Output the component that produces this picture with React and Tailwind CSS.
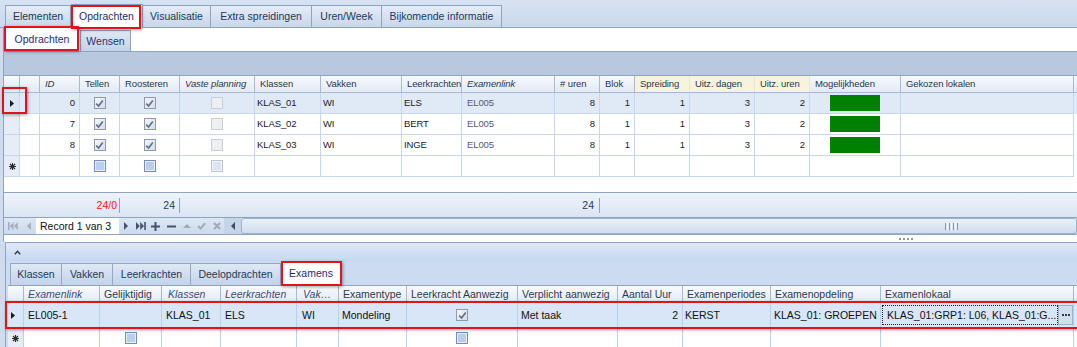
import React from "react";

const TOPG = "grid grid-cols-[16px_20px_40px_40px_60px_75px_66px_81px_60px_93px_45px_35px_55px_65px_55px_91px_173px]";
const BOTG = "grid grid-cols-[16px_76px_62px_59px_76px_42px_68px_111px_100px_65px_88px_110px_193px]";

const H = "flex items-center pl-[5px] border-r border-[#a7bad3] whitespace-nowrap overflow-hidden";
const HY = "flex items-center pl-[5px] border-r border-[#ebe8c8] bg-[#f6f4dd] whitespace-nowrap overflow-hidden";
const C = "flex items-center border-r border-b border-[#c6d8ef] whitespace-nowrap overflow-hidden";
const CI = "relative flex items-center border-r border-b border-[#c6d8ef]";
const BH = "flex items-center pl-[4px] border-r border-[#a7bad3] whitespace-nowrap overflow-hidden";
const BC = "flex items-center border-r border-b border-[#bcd0ea] whitespace-nowrap overflow-hidden";

function RedBox({ className }) {
  return (
    <span
      className={
        "pointer-events-none absolute z-20 border-2 border-[#e3131b] shadow-[1px_1px_3px_rgba(0,0,0,0.35)] " +
        className
      }
    />
  );
}

function Tri() {
  return (
    <svg width="4" height="7" viewBox="0 0 4 7">
      <path d="M0 0L4 3.5L0 7Z" fill="#1a1a1a" />
    </svg>
  );
}

function Star() {
  return (
    <svg width="7" height="7" viewBox="0 0 7 7">
      <path d="M3.5 0V7M0 3.5H7M1 1L6 6M6 1L1 6" stroke="#2a2a2a" strokeWidth="1.1" />
    </svg>
  );
}

function Cb({ k }) {
  if (k === "on")
    return (
      <span className="w-[12px] h-[12px] border border-[#8e9bad] bg-gradient-to-br from-[#f5f6f8] to-[#d8dce2] flex items-center justify-center">
        <svg width="9" height="9" viewBox="0 0 9 9">
          <path d="M1.2 4.6L3.6 7L7.8 1.4" fill="none" stroke="#5a7295" strokeWidth="1.7" />
        </svg>
      </span>
    );
  if (k === "off") return <span className="w-[12px] h-[12px] border border-[#cbd0d8] bg-[#eeeff2]" />;
  if (k === "new")
    return <span className="w-[12px] h-[12px] border border-[#6d90c4] bg-[#b9cfee] shadow-[inset_0_0_0_1px_#e6eefa]" />;
  return <span className="w-[12px] h-[12px] border border-[#b8c4d4] bg-[#dfe5ee] shadow-[inset_0_0_0_1px_#f2f5f9]" />;
}

function TopTab({ w, first, children }) {
  return (
    <div
      className={
        w +
        " h-[22px] flex items-center justify-center border-t border-r border-[#8ea4c1] bg-gradient-to-b from-[#e4ecf7] to-[#c8d7eb] text-[#1e395b] whitespace-nowrap " +
        (first ? "border-l" : "")
      }
    >
      {children}
    </div>
  );
}

function BTab({ w, first, children }) {
  return (
    <div
      className={
        w +
        " h-[22px] flex items-center justify-center border-t border-r border-[#93a8c4] bg-gradient-to-b from-[#dfe8f5] to-[#c3d3e9] text-[#1e395b] whitespace-nowrap " +
        (first ? "border-l" : "")
      }
    >
      {children}
    </div>
  );
}

function TopRow({ id, kl, lk, sel }) {
  return (
    <div className={TOPG + " h-[21px] text-[9.5px] tracking-[-0.1px] text-[#1b1b1b] " + (sel ? "bg-[#e0e9f6]" : "bg-white")}>
      <div className={CI + " pl-[6px] " + (sel ? "bg-[#dce6f4]" : "bg-[#e6edf7]")}>
        {sel && <Tri />}
        {sel && <RedBox className="left-[-2px] top-[-6px] w-[25px] h-[27px]" />}
      </div>
      <div className={C} />
      <div className={C + " justify-end pr-[4px]"}>{id}</div>
      <div className={C + " justify-center"}>
        <Cb k="on" />
      </div>
      <div className={C + " justify-center"}>
        <Cb k="on" />
      </div>
      <div className={C + " justify-center"}>
        <Cb k="off" />
      </div>
      <div className={C + " pl-[2px]"}>{kl}</div>
      <div className={C + " pl-[2px]"}>WI</div>
      <div className={C + " pl-[2px]"}>{lk}</div>
      <div className={C + " pl-[5px] text-[#5d5577]"}>EL005</div>
      <div className={C + " justify-end pr-[4px]"}>8</div>
      <div className={C + " justify-end pr-[4px]"}>1</div>
      <div className={C + " justify-end pr-[4px]"}>1</div>
      <div className={C + " justify-end pr-[4px]"}>3</div>
      <div className={C + " justify-end pr-[4px]"}>2</div>
      <div className={C}>
        <div className="ml-[20px] w-[50px] h-[16px] bg-[#008000]" />
      </div>
      <div className={C} />
    </div>
  );
}

function NavIcon({ w, children }) {
  return <div className={w + " h-full flex items-center justify-center"}>{children}</div>;
}

export default function App() {
  return (
    <div className="w-[1077px] h-[347px] overflow-hidden bg-[#cfdcee] font-['Liberation_Sans',Arial,sans-serif] text-[10.5px] leading-none select-none">
      {/* main tabs */}
      <div className="flex items-end h-[28px] pl-[5px] border-b border-[#8ea4c1] bg-gradient-to-b from-[#d6e2f1] to-[#cbd9ec]">
        <TopTab w="w-[66px]" first>
          Elementen
        </TopTab>
        <div className="relative z-10 w-[72px] h-[24px] mb-[-1px] flex items-center justify-center bg-white border-r border-t border-[#8ea4c1] text-[#1b2f6e]">
          Opdrachten
          <RedBox className="left-[0px] top-[0px] w-[70px] h-[24px]" />
        </div>
        <TopTab w="w-[68px]">Visualisatie</TopTab>
        <TopTab w="w-[101px]">Extra spreidingen</TopTab>
        <TopTab w="w-[70px]">Uren/Week</TopTab>
        <TopTab w="w-[120px]">Bijkomende informatie</TopTab>
      </div>

      {/* main panel */}
      <div className="ml-[3px] border-l border-[#8ea4c1] bg-white">
        {/* sub tabs */}
        <div className="flex items-end h-[23px] bg-white">
          <div className="relative w-[76px] h-[23px] flex items-center justify-center bg-white text-[#1b2f6e]">
            Opdrachten
            <RedBox className="left-[0px] top-[-2px] w-[75px] h-[25px]" />
          </div>
          <div className="w-[51px] h-[21px] flex items-center justify-center border-t border-r border-l border-[#8ea4c1] bg-gradient-to-b from-[#e0e9f5] to-[#c3d3e8] text-[#1e395b]">
            Wensen
          </div>
        </div>

        {/* group band */}
        <div className="h-[25px] border-y border-[#8ea4c1] bg-[#b7c8df]" />

        {/* header */}
        <div className={TOPG + " h-[17px] border-b border-[#a7bad3] bg-gradient-to-b from-[#f7f9fd] to-[#e3eaf5] text-[9.5px] tracking-[-0.1px] text-[#28374d]"}>
          <div className={H} />
          <div className={H} />
          <div className={H + " italic"}>ID</div>
          <div className={H}>Tellen</div>
          <div className={H}>Roosteren</div>
          <div className={H + " italic"}>Vaste planning</div>
          <div className={H}>Klassen</div>
          <div className={H}>Vakken</div>
          <div className={H + " pl-[4px]"}>Leerkrachten</div>
          <div className={H + " italic"}>Examenlink</div>
          <div className={H}># uren</div>
          <div className={H}>Blok</div>
          <div className={HY}>Spreiding</div>
          <div className={HY}>Uitz. dagen</div>
          <div className={HY}>Uitz. uren</div>
          <div className={H}>Mogelijkheden</div>
          <div className={H}>Gekozen lokalen</div>
        </div>

        <TopRow id="0" kl="KLAS_01" lk="ELS" sel />
        <TopRow id="7" kl="KLAS_02" lk="BERT" />
        <TopRow id="8" kl="KLAS_03" lk="INGE" />

        {/* new row */}
        <div className={TOPG + " h-[21px] bg-white"}>
          <div className={C + " pl-[5px] bg-[#e6edf7]"}>
            <Star />
          </div>
          <div className={C} />
          <div className={C} />
          <div className={C + " justify-center"}>
            <Cb k="new" />
          </div>
          <div className={C + " justify-center"}>
            <Cb k="new" />
          </div>
          <div className={C + " justify-center"}>
            <Cb k="newoff" />
          </div>
          <div className={C} />
          <div className={C} />
          <div className={C} />
          <div className={C} />
          <div className={C} />
          <div className={C} />
          <div className={C} />
          <div className={C} />
          <div className={C} />
          <div className={C} />
          <div className={C} />
        </div>

        <div className="h-[15px] bg-white" />

        {/* footer summary */}
        <div className="h-[26px] border-y border-[#8ea4c1] bg-gradient-to-b from-[#eef3fa] to-[#dbe5f2] text-[10.5px] text-[#2a3a58]">
          <div className={TOPG + " h-full items-center"}>
            <div />
            <div />
            <div />
            <div className="h-[15px] border-r border-[#8ea4c1] flex items-center justify-end pr-[2px] text-[#ff1414]">24/0</div>
            <div className="h-[15px] border-r border-[#8ea4c1] flex items-center justify-end pr-[4px]">24</div>
            <div />
            <div />
            <div />
            <div />
            <div />
            <div className="h-[15px] border-r border-[#8ea4c1] flex items-center justify-end pr-[5px]">24</div>
          </div>
        </div>

        {/* navigator */}
        <div className="h-[17px] border-b border-[#8ea4c1] bg-gradient-to-b from-[#dde7f4] to-[#ccdaed] flex">
          <NavIcon w="w-[17px]">
            <svg width="10" height="8" viewBox="0 0 10 8">
              <path d="M0 0H1.6V8H0Z M5.6 0V8L1.8 4Z M9.8 0V8L6 4Z" fill="#a6afbd" />
            </svg>
          </NavIcon>
          <NavIcon w="w-[15px]">
            <svg width="4" height="8" viewBox="0 0 4 8">
              <path d="M4 0V8L0 4Z" fill="#a6afbd" />
            </svg>
          </NavIcon>
          <div className="w-[83px] h-full bg-white flex items-center pl-[4px] text-[10.5px] text-[#111]">Record 1 van 3</div>
          <NavIcon w="w-[14px]">
            <svg width="4" height="8" viewBox="0 0 4 8">
              <path d="M0 0V8L4 4Z" fill="#44546d" />
            </svg>
          </NavIcon>
          <NavIcon w="w-[15px]">
            <svg width="10" height="8" viewBox="0 0 10 8">
              <path d="M0 0V8L3.8 4Z M4.2 0V8L8 4Z M8.2 0H9.8V8H8.2Z" fill="#44546d" />
            </svg>
          </NavIcon>
          <NavIcon w="w-[15px]">
            <svg width="9" height="9" viewBox="0 0 9 9">
              <path d="M3.5 0H5.5V9H3.5Z M0 3.5H9V5.5H0Z" fill="#44546d" />
            </svg>
          </NavIcon>
          <NavIcon w="w-[16px]">
            <svg width="9" height="9" viewBox="0 0 9 9">
              <path d="M0 3.5H9V5.5H0Z" fill="#44546d" />
            </svg>
          </NavIcon>
          <NavIcon w="w-[15px]">
            <svg width="8" height="6" viewBox="0 0 8 6">
              <path d="M0 5H8L4 1Z" fill="#a0a9b6" />
            </svg>
          </NavIcon>
          <NavIcon w="w-[15px]">
            <svg width="9" height="8" viewBox="0 0 9 8">
              <path d="M1 4L3.6 6.6L8.2 1.2" fill="none" stroke="#a0a9b6" strokeWidth="2" />
            </svg>
          </NavIcon>
          <NavIcon w="w-[15px]">
            <svg width="8" height="8" viewBox="0 0 8 8">
              <path d="M1 1L7 7M7 1L1 7" stroke="#a0a9b6" strokeWidth="2" />
            </svg>
          </NavIcon>
          <div className="w-[17px] h-full bg-[#c6d4e8] flex items-center justify-center">
            <svg width="4" height="8" viewBox="0 0 4 8">
              <path d="M4 0V8L0 4Z" fill="#3e4d66" />
            </svg>
          </div>
          <div className="flex-1 h-full rounded-[3px] border border-[#9fb2cb] bg-gradient-to-b from-[#e9f0f9] to-[#d0ddef] flex items-center">
            <div className="ml-[703px] flex gap-[1px]">
              <span className="w-[1px] h-[7px] bg-[#8196b3]" />
              <span className="w-[1px] h-[7px] bg-[#ffffff]" />
              <span className="w-[1px] h-[7px] bg-[#8196b3]" />
              <span className="w-[1px] h-[7px] bg-[#ffffff]" />
              <span className="w-[1px] h-[7px] bg-[#8196b3]" />
              <span className="w-[1px] h-[7px] bg-[#ffffff]" />
              <span className="w-[1px] h-[7px] bg-[#8196b3]" />
            </div>
          </div>
        </div>

        {/* splitter */}
        <div className="h-[7px] bg-white flex items-center">
          <div className="ml-[895px] flex gap-[2px]">
            <span className="w-[2px] h-[2px] bg-[#8497b4]" />
            <span className="w-[2px] h-[2px] bg-[#8497b4]" />
            <span className="w-[2px] h-[2px] bg-[#8497b4]" />
            <span className="w-[2px] h-[2px] bg-[#8497b4]" />
          </div>
        </div>
      </div>

      {/* bottom panel */}
      <div className="ml-[5px] border-l border-[#8ea4c1] bg-[#ccdbef]">
        <div className="h-[19px] border-t border-[#8ea4c1] bg-gradient-to-b from-[#dfe9f8] to-[#c6d8f0] flex items-center pl-[8px]">
          <svg width="7" height="5" viewBox="0 0 7 5">
            <path d="M0.8 4.2L3.5 1.3L6.2 4.2" fill="none" stroke="#2f3d52" strokeWidth="1.5" />
          </svg>
        </div>
        <div className="h-[24px] flex items-end pl-[4px] bg-[#ccdbef]">
          <BTab w="w-[52px]" first>
            Klassen
          </BTab>
          <BTab w="w-[51px]">Vakken</BTab>
          <BTab w="w-[78px]">Leerkrachten</BTab>
          <BTab w="w-[90px]">Deelopdrachten</BTab>
          <div className="relative w-[61px] h-[24px] flex items-center justify-center bg-white border-t border-r border-[#93a8c4] text-[#1b2f6e]">
            Examens
            <RedBox className="left-[0px] top-[-1px] w-[61px] h-[25px]" />
          </div>
        </div>

        <div className="ml-[2px] bg-white">
          {/* header */}
          <div className={BOTG + " h-[18px] border-t border-b border-t-[#8ea4c1] border-b-[#a7bad3] bg-gradient-to-b from-[#f8fafd] to-[#e3ebf6] text-[#2c3a50]"}>
            <div className={BH} />
            <div className={BH + " italic text-[#3d4c78]"}>Examenlink</div>
            <div className={BH}>Gelijktijdig</div>
            <div className={BH + " italic pl-[6px] text-[#3d4c78]"}>Klassen</div>
            <div className={BH + " italic text-[#3d4c78]"}>Leerkrachten</div>
            <div className={BH + " italic pl-[6px] text-[#3d4c78]"}>Vak…</div>
            <div className={BH}>Examentype</div>
            <div className={BH}>Leerkracht Aanwezig</div>
            <div className={BH}>Verplicht aanwezig</div>
            <div className={BH}>Aantal Uur</div>
            <div className={BH}>Examenperiodes</div>
            <div className={BH}>Examenopdeling</div>
            <div className={BH}>Examenlokaal</div>
          </div>

          {/* selected row */}
          <div className={BOTG + " relative h-[25px] bg-[#d9e6f8] text-[#111]"}>
            <RedBox className="left-[-3px] right-[-2px] top-[-2px] bottom-[-1px]" />
            <div className={BC + " pl-[3px]"}>
              <Tri />
            </div>
            <div className={BC + " pl-[4px]"}>EL005-1</div>
            <div className={BC} />
            <div className={BC + " pl-[4px]"}>KLAS_01</div>
            <div className={BC + " pl-[4px]"}>ELS</div>
            <div className={BC + " pl-[5px]"}>WI</div>
            <div className={BC + " pl-[3px]"}>Mondeling</div>
            <div className={BC + " justify-center"}>
              <Cb k="on" />
            </div>
            <div className={BC + " pl-[3px]"}>Met taak</div>
            <div className={BC + " justify-end pr-[4px]"}>2</div>
            <div className={BC + " pl-[2px]"}>KERST</div>
            <div className={BC + " pl-[3px]"}>KLAS_01: GROEPEN</div>
            <div className={BC + " pl-[1px]"}>
              <div className="flex-1 h-[20px] border border-dotted border-[#222] flex items-center pl-[4px] overflow-hidden">
                KLAS_01:GRP1: L06, KLAS_01:G...
              </div>
              <div className="w-[15px] h-[20px] border border-[#9fb2cc] bg-[#d3deed] flex items-center justify-center gap-[1px]">
                <span className="w-[2px] h-[2px] bg-[#2f3d52]" />
                <span className="w-[2px] h-[2px] bg-[#2f3d52]" />
                <span className="w-[2px] h-[2px] bg-[#2f3d52]" />
              </div>
            </div>
          </div>

          {/* new row */}
          <div className={BOTG + " h-[21px] bg-white"}>
            <div className={BC + " pl-[4px] bg-[#e6edf7]"}>
              <Star />
            </div>
            <div className={BC} />
            <div className={BC + " justify-center"}>
              <Cb k="new" />
            </div>
            <div className={BC} />
            <div className={BC} />
            <div className={BC} />
            <div className={BC} />
            <div className={BC + " justify-center"}>
              <Cb k="new" />
            </div>
            <div className={BC} />
            <div className={BC} />
            <div className={BC} />
            <div className={BC} />
            <div className={BC} />
          </div>
        </div>
      </div>
    </div>
  );
}
